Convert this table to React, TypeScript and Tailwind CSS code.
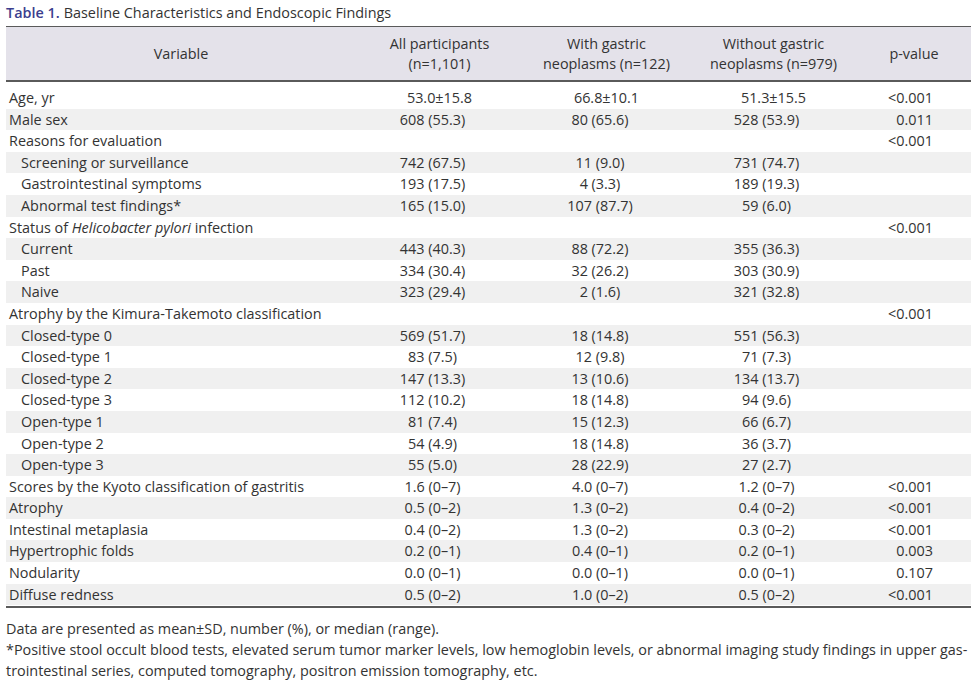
import React from 'react'

type Row = {
  label: React.ReactNode
  indent?: boolean
  all?: string
  with?: string
  without?: string
  p?: string
  pm?: boolean
}

const rows: Row[] = [
  { label: 'Age, yr', all: '53.0±15.8', with: '66.8±10.1', without: '51.3±15.5', p: '<0.001', pm: true },
  { label: 'Male sex', all: '608 (55.3)', with: '80 (65.6)', without: '528 (53.9)', p: '0.011' },
  { label: 'Reasons for evaluation', p: '<0.001' },
  { label: 'Screening or surveillance', indent: true, all: '742 (67.5)', with: '11 (9.0)', without: '731 (74.7)' },
  { label: 'Gastrointestinal symptoms', indent: true, all: '193 (17.5)', with: '4 (3.3)', without: '189 (19.3)' },
  { label: 'Abnormal test findings*', indent: true, all: '165 (15.0)', with: '107 (87.7)', without: '59 (6.0)' },
  {
    label: (
      <>
        Status of <i>Helicobacter pylori</i> infection
      </>
    ),
    p: '<0.001',
  },
  { label: 'Current', indent: true, all: '443 (40.3)', with: '88 (72.2)', without: '355 (36.3)' },
  { label: 'Past', indent: true, all: '334 (30.4)', with: '32 (26.2)', without: '303 (30.9)' },
  { label: 'Naive', indent: true, all: '323 (29.4)', with: '2 (1.6)', without: '321 (32.8)' },
  { label: 'Atrophy by the Kimura-Takemoto classification', p: '<0.001' },
  { label: 'Closed-type 0', indent: true, all: '569 (51.7)', with: '18 (14.8)', without: '551 (56.3)' },
  { label: 'Closed-type 1', indent: true, all: '83 (7.5)', with: '12 (9.8)', without: '71 (7.3)' },
  { label: 'Closed-type 2', indent: true, all: '147 (13.3)', with: '13 (10.6)', without: '134 (13.7)' },
  { label: 'Closed-type 3', indent: true, all: '112 (10.2)', with: '18 (14.8)', without: '94 (9.6)' },
  { label: 'Open-type 1', indent: true, all: '81 (7.4)', with: '15 (12.3)', without: '66 (6.7)' },
  { label: 'Open-type 2', indent: true, all: '54 (4.9)', with: '18 (14.8)', without: '36 (3.7)' },
  { label: 'Open-type 3', indent: true, all: '55 (5.0)', with: '28 (22.9)', without: '27 (2.7)' },
  { label: 'Scores by the Kyoto classification of gastritis', all: '1.6 (0–7)', with: '4.0 (0–7)', without: '1.2 (0–7)', p: '<0.001' },
  { label: 'Atrophy', all: '0.5 (0–2)', with: '1.3 (0–2)', without: '0.4 (0–2)', p: '<0.001' },
  { label: 'Intestinal metaplasia', all: '0.4 (0–2)', with: '1.3 (0–2)', without: '0.3 (0–2)', p: '<0.001' },
  { label: 'Hypertrophic folds', all: '0.2 (0–1)', with: '0.4 (0–1)', without: '0.2 (0–1)', p: '0.003' },
  { label: 'Nodularity', all: '0.0 (0–1)', with: '0.0 (0–1)', without: '0.0 (0–1)', p: '0.107' },
  { label: 'Diffuse redness', all: '0.5 (0–2)', with: '1.0 (0–2)', without: '0.5 (0–2)', p: '<0.001' },
]

const cols = 'grid grid-cols-[350px_167px_167px_167px_114px]'

export default function App() {
  return (
    <div className="w-[972px] h-[681px] bg-white text-[#333] text-[14.4px] font-['Open_Sans',sans-serif] overflow-hidden">
      {/* caption */}
      <div className="h-[26px] pl-[6px] flex items-center">
        <span className="font-semibold text-[#3b3e8e]">Table 1.</span>
        <span className="ml-[4px]">Baseline Characteristics and Endoscopic Findings</span>
      </div>

      <div className="ml-[6px] w-[965px]">
        {/* header */}
        <div className={`${cols} h-[56px] bg-[#e4e2ea] border-t border-b-2 border-[#5a5a5a] leading-[20px] items-center text-center`}>
          <div>Variable</div>
          <div>
            All participants
            <br />
            (n=1,101)
          </div>
          <div>
            With gastric
            <br />
            neoplasms (n=122)
          </div>
          <div>
            Without gastric
            <br />
            neoplasms (n=979)
          </div>
          <div>p-value</div>
        </div>

        {/* body */}
        <div className="pt-[5px] pb-[1px] border-b-2 border-[#5a5a5a]">
          {rows.map((r, i) => (
            <div key={i} className={`${cols} h-[21.6px] items-center leading-[21.6px] ${i % 2 === 1 ? 'bg-[#f0f0f0]' : ''}`}>
              <div className={r.indent ? 'pl-[15px]' : 'pl-[3px]'}>{r.label}</div>
              <div className={`text-center ${r.pm ? '' : 'pr-[14px]'}`}>{r.all}</div>
              <div className={`text-center ${r.pm ? '' : 'pr-[13px]'}`}>{r.with}</div>
              <div className={`text-center ${r.pm ? '' : 'pr-[14px]'}`}>{r.without}</div>
              <div className="text-right pr-[38px]">{r.p}</div>
            </div>
          ))}
        </div>
      </div>

      {/* footnotes */}
      <div className="pl-[6px] pt-[10px] leading-[21px]">
        <div>Data are presented as mean±SD, number (%), or median (range).</div>
        <div className="whitespace-nowrap">
          *Positive stool occult blood tests, elevated serum tumor marker levels, low hemoglobin levels, or abnormal imaging study findings in upper gas-
        </div>
        <div>trointestinal series, computed tomography, positron emission tomography, etc.</div>
      </div>
    </div>
  )
}
